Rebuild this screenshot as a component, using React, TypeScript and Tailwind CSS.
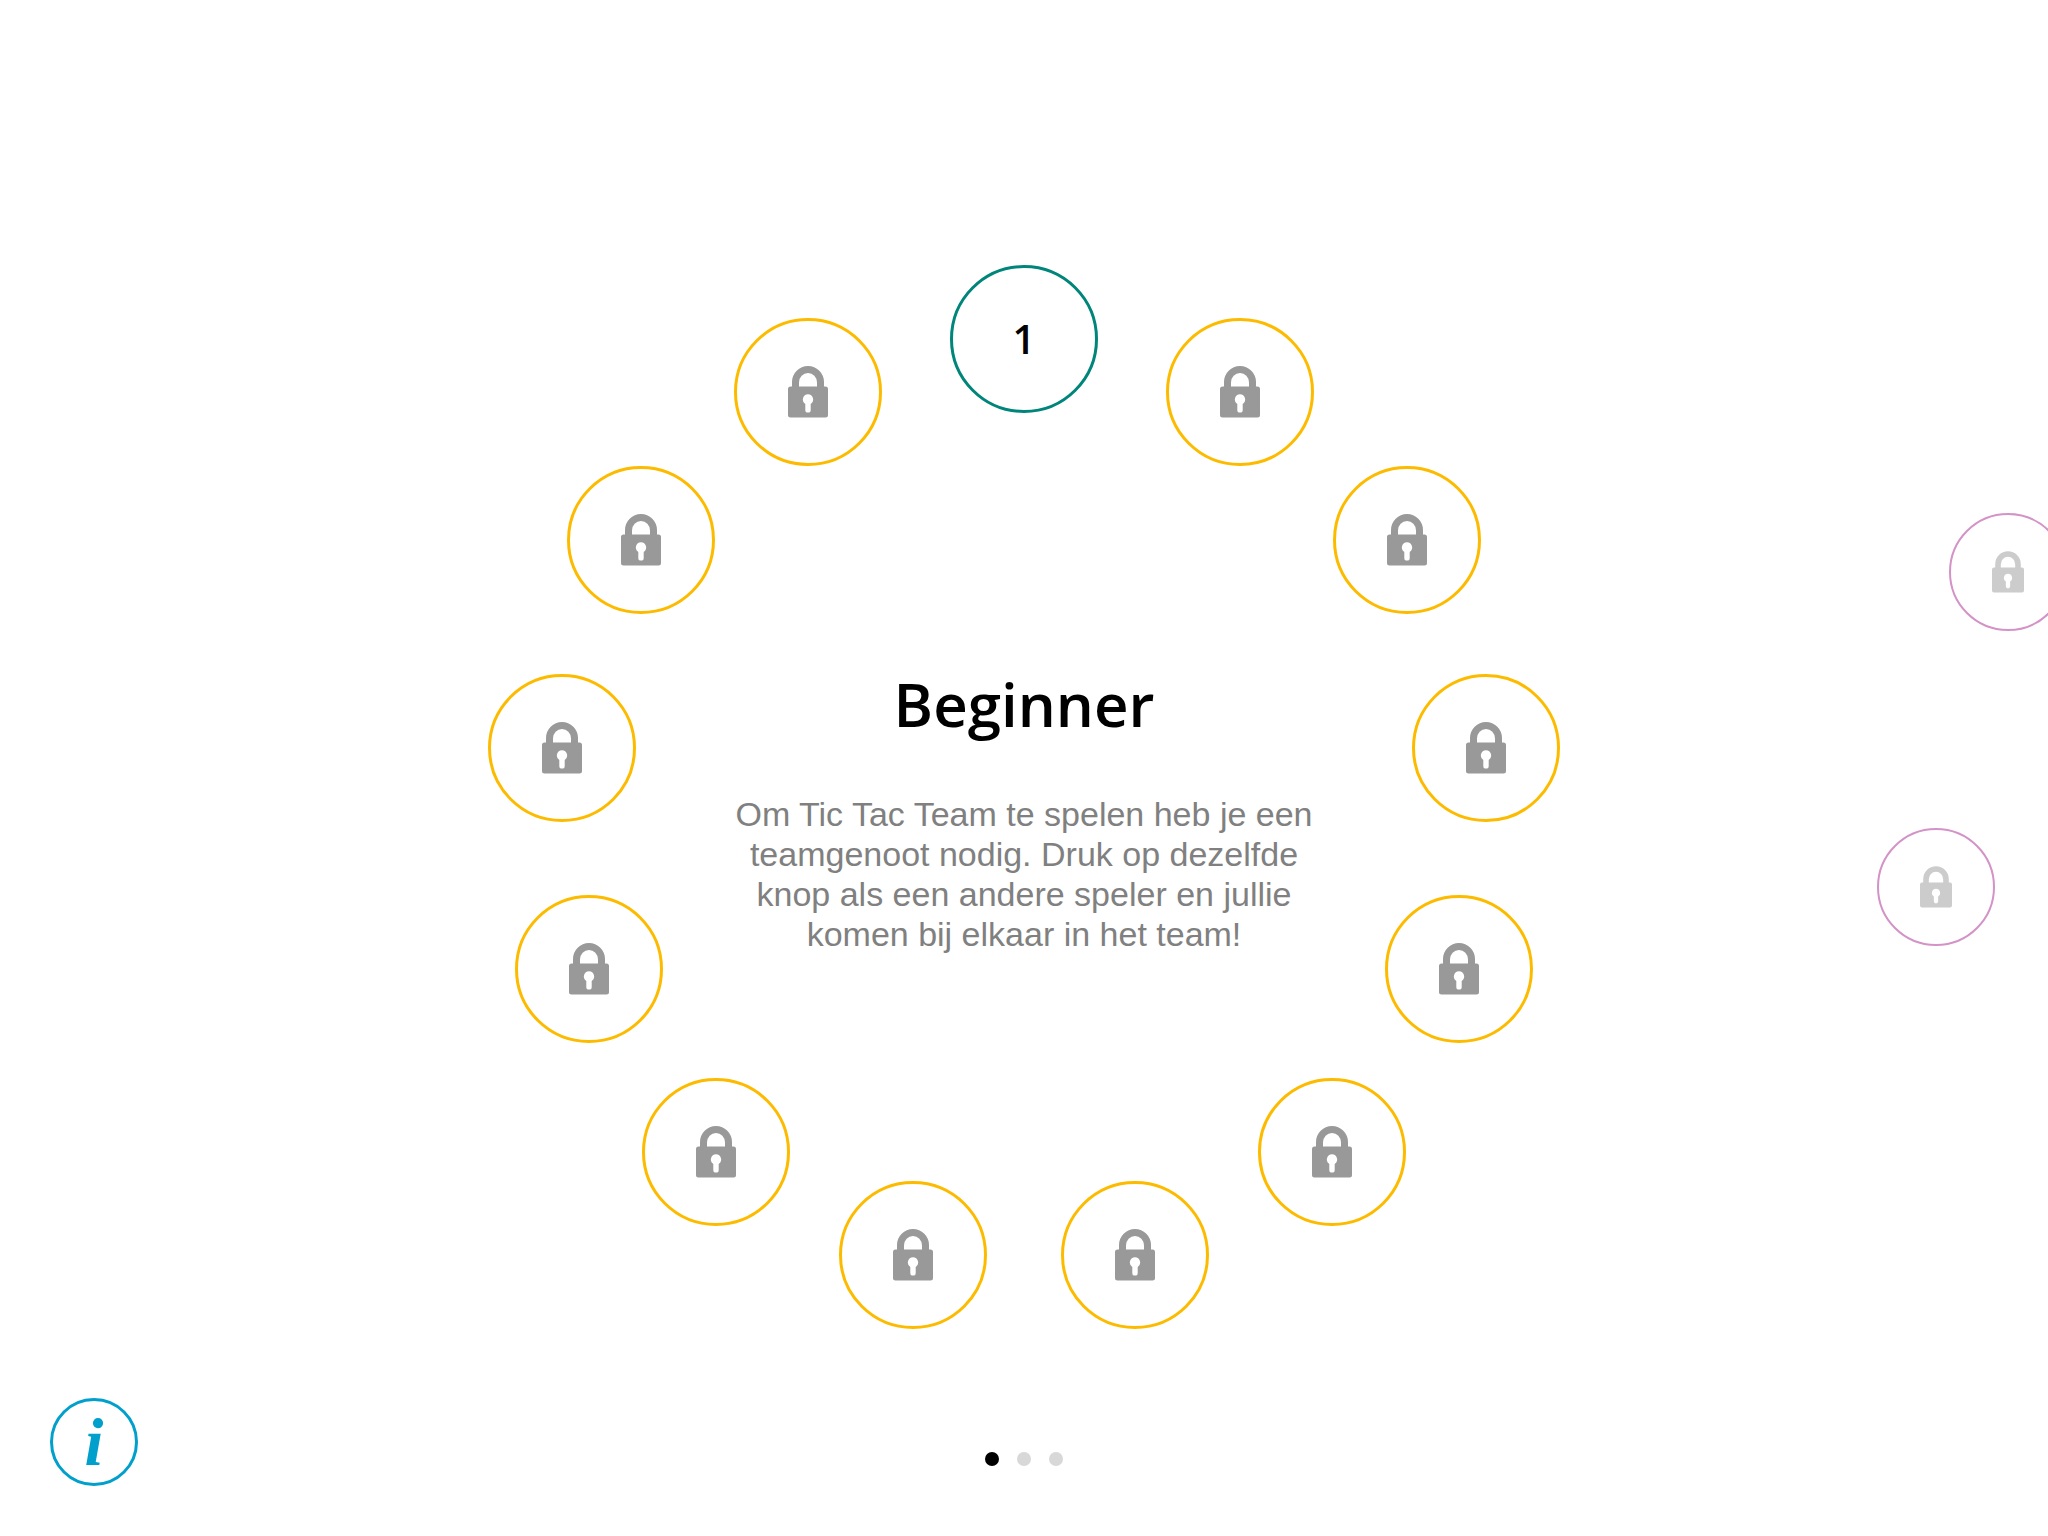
type RingSize = "large" | "small";

function LockIcon({ className }: { className: string }) {
  return (
    <svg viewBox="0 0 40 52" className={className} fill="currentColor" aria-hidden="true">
      <path d="M4 21V16a16 16 0 0 1 32 0v5h-7v-4.500a9 9.500 0 0 0-18 0V21Z" />
      <path
        fillRule="evenodd"
        d="M2.500 20.500h35a2.500 2.500 0 0 1 2.500 2.500v26a2.500 2.500 0 0 1-2.500 2.500h-35a2.500 2.500 0 0 1-2.500-2.500v-26a2.500 2.500 0 0 1 2.500-2.500ZM20 28.300a5.200 5.200 0 0 0-2.700 9.600v6a2.700 2.700 0 0 0 5.400 0v-6a5.200 5.200 0 0 0-2.700-9.600Z"
      />
    </svg>
  );
}

const ringStyles = {
  large: {
    radius: 465,
    ring: "size-[1080px]",
    button: "size-[148px] border-3",
    lock: "h-[52px] w-10 text-[#999999]",
  },
  small: {
    radius: 372,
    ring: "size-[864px]",
    button: "size-[118px] border-2",
    lock: "h-[42px] w-8 text-[#cccccc]",
  },
};

function LevelRing({
  name,
  count,
  unlocked,
  size,
  lockedBorder,
  children,
}: {
  name: string;
  count: number;
  unlocked: number;
  size: RingSize;
  lockedBorder: string;
  children?: React.ReactNode;
}) {
  const style = ringStyles[size];
  return (
    <section
      aria-label={name}
      className={`relative flex shrink-0 items-center justify-center ${style.ring}`}
    >
      {Array.from({ length: count }, (_, i) => {
        const angle = (i * 2 * Math.PI) / count;
        const x = Math.round(style.radius * Math.sin(angle));
        const y = Math.round(-style.radius * Math.cos(angle));
        const open = i < unlocked;
        return (
          <button
            key={i}
            type="button"
            disabled={!open}
            aria-label={open ? `Level ${i + 1}` : `Level ${i + 1} vergrendeld`}
            className={`absolute flex -translate-x-1/2 -translate-y-1/2 items-center justify-center rounded-full bg-white ${style.button} ${open ? "border-[#00857a]" : lockedBorder}`}
            style={{ left: `calc(50% + ${x}px)`, top: `calc(50% + ${y}px)` }}
          >
            {open ? (
              <span className="font-['Open_Sans',sans-serif] text-[40px] leading-none font-semibold text-black">
                {i + 1}
              </span>
            ) : (
              <LockIcon className={style.lock} />
            )}
          </button>
        );
      })}
      {children}
    </section>
  );
}

export default function App() {
  return (
    <div className="flex min-h-screen flex-col overflow-hidden bg-white">
      <main className="flex flex-1 items-center gap-[303px] pt-[210px] pl-[calc(50%-540px)]">
        <LevelRing
          name="Beginner"
          count={13}
          unlocked={1}
          size="large"
          lockedBorder="border-[#fdbb00]"
        >
          <div className="flex w-[600px] flex-col items-center gap-[50px] pt-2.5 text-center">
            <h1 className="font-['Open_Sans',sans-serif] text-[60px] leading-20 font-semibold text-black">
              Beginner
            </h1>
            <p className="font-['Liberation_Sans',Arial,sans-serif] text-[34px] leading-10 text-[#808080]">
              Om Tic Tac Team te spelen heb je een
              <br />
              teamgenoot nodig. Druk op dezelfde
              <br />
              knop als een andere speler en jullie
              <br />
              komen bij elkaar in het team!
            </p>
          </div>
        </LevelRing>
        <LevelRing
          name="Volgende niveau"
          count={7}
          unlocked={0}
          size="small"
          lockedBorder="border-[#d393c7]"
        />
      </main>

      <footer className="grid grid-cols-3 items-end px-[50px] pb-[50px]">
        <button
          type="button"
          aria-label="Informatie"
          className="flex size-[88px] items-center justify-center rounded-full border-3 border-[#009fcc] text-[#009fcc]"
        >
          <span className="font-['Liberation_Serif','Times_New_Roman',serif] text-[68px] leading-none font-bold italic">
            i
          </span>
        </button>
        <nav aria-label="Pagina's" className="mb-5 flex justify-center gap-[18px]">
          <button type="button" aria-label="Pagina 1" aria-current="page" className="size-3.5 rounded-full bg-black" />
          <button type="button" aria-label="Pagina 2" className="size-3.5 rounded-full bg-[#d8d8d8]" />
          <button type="button" aria-label="Pagina 3" className="size-3.5 rounded-full bg-[#d8d8d8]" />
        </nav>
      </footer>
    </div>
  );
}
